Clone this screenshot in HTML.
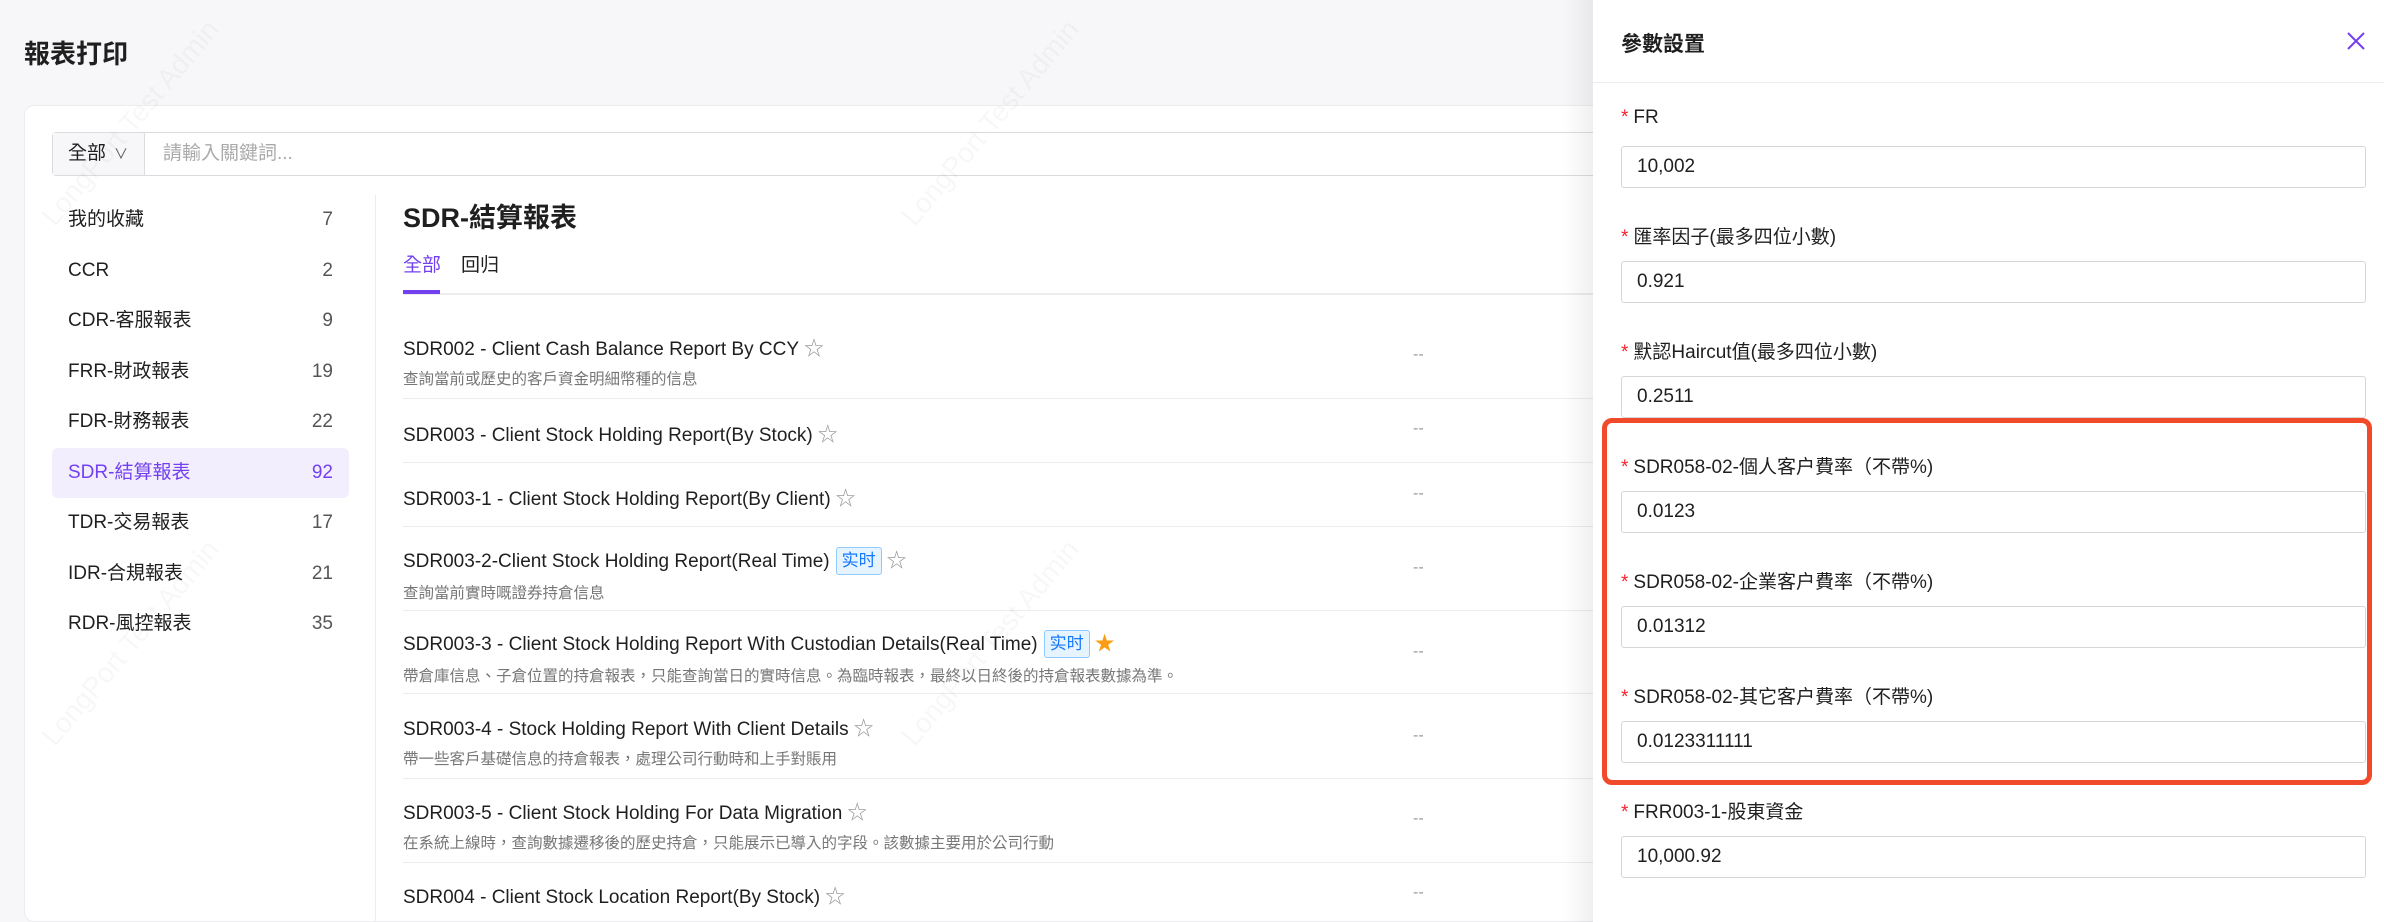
<!DOCTYPE html>
<html><head><meta charset="utf-8"><style>
*{box-sizing:border-box;margin:0;padding:0}
html{width:2384px;height:922px;overflow:hidden}
body{width:2384px;height:922px;overflow:hidden;background:#f7f7f9;font-family:"Liberation Sans","Noto Sans CJK TC",sans-serif;color:#1f1f1f;position:relative}
.title{position:absolute;left:24px;top:34px;font-size:26px;font-weight:bold}
.card{position:absolute;left:24px;top:105px;width:2400px;height:817px;background:#fff;border:1px solid #ececef;border-radius:10px}
.search{position:absolute;left:52px;top:132px;width:1600px;height:44px;border:1px solid #dcdce0;border-radius:4px;background:#fff}
.sel{position:absolute;left:0;top:0;width:92px;height:42px;background:#f7f7f9;border-right:1px solid #dcdce0;font-size:19px;line-height:42px;padding-left:15px}
.sel span{font-size:14px;color:#555;margin-left:8px}
.ph{position:absolute;left:110px;top:0;line-height:42px;font-size:19px;color:#aaa}
.side{position:absolute;left:52px;top:195px;width:297px}
.si{height:50.5px;position:relative;font-size:19px;border-radius:6px}
.si span{position:absolute;left:16px;top:0;line-height:50px}
.si b{position:absolute;right:16px;top:0;line-height:50px;font-weight:normal;color:#555}
.si.act{background:#f2eefe;color:#7340f0}.si.act b{color:#7340f0}
.vdiv{position:absolute;left:375px;top:195px;width:1px;height:740px;background:#ececef}
.ct{position:absolute;left:403px;top:196px;font-size:27px;font-weight:bold}
.tabs{position:absolute;left:403px;top:250px;font-size:19px}
.tabs span{margin-right:20px}
.tabs .a{color:#7340f0}
.tl{position:absolute;left:403px;top:293px;width:1300px;height:2px;background:#ececef}
.ul{position:absolute;left:403px;top:290px;width:37px;height:4px;background:#7340f0}
.row{position:absolute;left:403px;width:1300px}
.row .t{font-size:19px;color:#1f1f1f;white-space:nowrap}
.row .d{font-size:15.5px;color:#777;margin-top:6px;white-space:nowrap}
.sep{position:absolute;left:403px;width:1300px;height:1px;background:#ececef}
.dash{position:absolute;left:1413px;color:#999;font-size:16px}
.star{color:#999;font-size:20px;margin-left:5px}
.star.on{color:#fa9d14}
.bad{display:inline-block;font-size:17px;color:#1677ff;background:#e6f4ff;border:1px solid #91caff;border-radius:3px;padding:0 5px;line-height:26px;margin-left:6px;vertical-align:1px}
.wm{position:absolute;font-size:28px;color:rgba(0,0,0,0.03);transform:rotate(-50deg);white-space:nowrap;transform-origin:left bottom}
.shadow{position:absolute;left:1563px;top:0;width:30px;height:922px;background:linear-gradient(to right,rgba(0,0,0,0),rgba(0,0,0,0.06))}
.drawer{position:absolute;left:1593px;top:0;width:791px;height:922px;background:#fff}
.dh{position:absolute;left:0;top:0;width:791px;height:83px;border-bottom:1px solid #ececef}
.dh .h{position:absolute;left:28px;top:28px;font-size:21px;font-weight:bold}
.x{position:absolute;left:752px;top:30px}
.lb{position:absolute;left:28px;font-size:19px}
.lb i{color:#f5222d;font-style:normal;margin-right:5px}
.in{position:absolute;left:28px;width:745px;height:42px;border:1px solid #d6d6da;border-radius:3px;font-size:19px;line-height:40px;padding-left:15px}
.red{position:absolute;left:1602px;top:418px;width:770px;height:367px;border:5px solid #f04a2a;border-radius:10px}
</style></head><body>
<div class="title">報表打印</div>
<div class="card"></div>
<div class="search"><div class="sel">全部<span>∨</span></div><div class="ph">請輸入關鍵詞...</div></div>
<div class="side">
<div class="si"><span>我的收藏</span><b>7</b></div>
<div class="si"><span>CCR</span><b>2</b></div>
<div class="si"><span>CDR-客服報表</span><b>9</b></div>
<div class="si"><span>FRR-財政報表</span><b>19</b></div>
<div class="si"><span>FDR-財務報表</span><b>22</b></div>
<div class="si act"><span>SDR-結算報表</span><b>92</b></div>
<div class="si"><span>TDR-交易報表</span><b>17</b></div>
<div class="si"><span>IDR-合規報表</span><b>21</b></div>
<div class="si"><span>RDR-風控報表</span><b>35</b></div>
</div>
<div class="vdiv"></div>
<div class="ct">SDR-結算報表</div>
<div class="tabs"><span class="a">全部</span><span>回归</span></div>
<div class="tl"></div><div class="ul"></div>

<div class="row" style="top:332px"><div class="t">SDR002 - Client Cash Balance Report By CCY<span class="star">☆</span></div><div class="d">查詢當前或歷史的客戶資金明細幣種的信息</div></div>
<div class="dash" style="top:346px">--</div>
<div class="sep" style="top:398px"></div>
<div class="row" style="top:418px"><div class="t">SDR003 - Client Stock Holding Report(By Stock)<span class="star">☆</span></div></div>
<div class="dash" style="top:420px">--</div>
<div class="sep" style="top:462px"></div>
<div class="row" style="top:482px"><div class="t">SDR003-1 - Client Stock Holding Report(By Client)<span class="star">☆</span></div></div>
<div class="dash" style="top:485px">--</div>
<div class="sep" style="top:526px"></div>
<div class="row" style="top:544px"><div class="t">SDR003-2-Client Stock Holding Report(Real Time)<span class="bad">实时</span><span class="star">☆</span></div><div class="d">查詢當前實時嘅證券持倉信息</div></div>
<div class="dash" style="top:559px">--</div>
<div class="sep" style="top:610px"></div>
<div class="row" style="top:627px"><div class="t">SDR003-3 - Client Stock Holding Report With Custodian Details(Real Time)<span class="bad">实时</span><span class="star on">★</span></div><div class="d">帶倉庫信息、子倉位置的持倉報表，只能查詢當日的實時信息。為臨時報表，最終以日終後的持倉報表數據為準。</div></div>
<div class="dash" style="top:643px">--</div>
<div class="sep" style="top:693px"></div>
<div class="row" style="top:712px"><div class="t">SDR003-4 - Stock Holding Report With Client Details<span class="star">☆</span></div><div class="d">帶一些客戶基礎信息的持倉報表，處理公司行動時和上手對賬用</div></div>
<div class="dash" style="top:727px">--</div>
<div class="sep" style="top:778px"></div>
<div class="row" style="top:796px"><div class="t">SDR003-5 - Client Stock Holding For Data Migration<span class="star">☆</span></div><div class="d">在系統上線時，查詢數據遷移後的歷史持倉，只能展示已導入的字段。該數據主要用於公司行動</div></div>
<div class="dash" style="top:810px">--</div>
<div class="sep" style="top:862px"></div>
<div class="row" style="top:880px"><div class="t">SDR004 - Client Stock Location Report(By Stock)<span class="star">☆</span></div></div>
<div class="dash" style="top:884px">--</div>

<div class="wm" style="left:60px;top:200px">LongPort Test Admin</div>
<div class="wm" style="left:920px;top:200px">LongPort Test Admin</div>
<div class="wm" style="left:60px;top:720px">LongPort Test Admin</div>
<div class="wm" style="left:920px;top:720px">LongPort Test Admin</div>

<div class="shadow"></div>
<div class="drawer">
<div class="dh"><div class="h">參數設置</div>
<svg class="x" width="22" height="22" viewBox="0 0 22 22"><path d="M3 3L19 19M19 3L3 19" stroke="#7340f0" stroke-width="2"/></svg></div>
<div class="lb" style="top:107px"><i>*</i>FR</div>
<div class="in" style="top:146px">10,002</div>
<div class="lb" style="top:222px"><i>*</i>匯率因子(最多四位小數)</div>
<div class="in" style="top:261px">0.921</div>
<div class="lb" style="top:337px"><i>*</i>默認Haircut值(最多四位小數)</div>
<div class="in" style="top:376px">0.2511</div>
<div class="lb" style="top:452px"><i>*</i>SDR058-02-個人客户費率（不帶%)</div>
<div class="in" style="top:491px">0.0123</div>
<div class="lb" style="top:567px"><i>*</i>SDR058-02-企業客户費率（不帶%)</div>
<div class="in" style="top:606px">0.01312</div>
<div class="lb" style="top:682px"><i>*</i>SDR058-02-其它客户費率（不帶%)</div>
<div class="in" style="top:721px">0.0123311111</div>
<div class="lb" style="top:797px"><i>*</i>FRR003-1-股東資金</div>
<div class="in" style="top:836px">10,000.92</div>
</div>
<div class="red"></div>
</body></html>
